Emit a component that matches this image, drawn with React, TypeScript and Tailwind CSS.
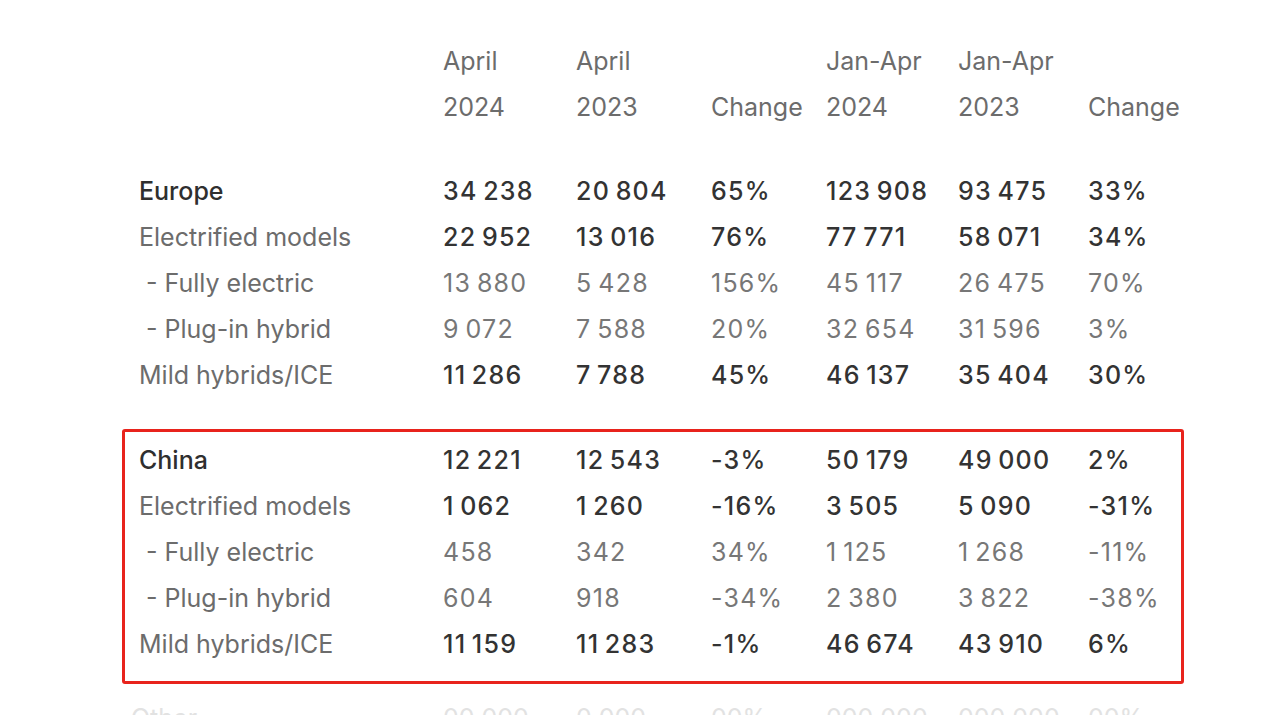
import React from "react";

type Row = {
  label: string;
  values: string[];
  kind: "region" | "bold" | "sub";
};

const europe: Row[] = [
  { label: "Europe", values: ["34 238", "20 804", "65%", "123 908", "93 475", "33%"], kind: "region" },
  { label: "Electrified models", values: ["22 952", "13 016", "76%", "77 771", "58 071", "34%"], kind: "bold" },
  { label: " - Fully electric", values: ["13 880", "5 428", "156%", "45 117", "26 475", "70%"], kind: "sub" },
  { label: " - Plug-in hybrid", values: ["9 072", "7 588", "20%", "32 654", "31 596", "3%"], kind: "sub" },
  { label: "Mild hybrids/ICE", values: ["11 286", "7 788", "45%", "46 137", "35 404", "30%"], kind: "bold" },
];

const china: Row[] = [
  { label: "China", values: ["12 221", "12 543", "-3%", "50 179", "49 000", "2%"], kind: "region" },
  { label: "Electrified models", values: ["1 062", "1 260", "-16%", "3 505", "5 090", "-31%"], kind: "bold" },
  { label: " - Fully electric", values: ["458", "342", "34%", "1 125", "1 268", "-11%"], kind: "sub" },
  { label: " - Plug-in hybrid", values: ["604", "918", "-34%", "2 380", "3 822", "-38%"], kind: "sub" },
  { label: "Mild hybrids/ICE", values: ["11 159", "11 283", "-1%", "46 674", "43 910", "6%"], kind: "bold" },
];

const cols = "grid grid-cols-[304px_133px_135px_115px_132px_130px_1fr] items-center";

// thousands separated by a narrow space, like the source
const fmt = (s: string) => s.replace(/ /g, "\u2009");

const TableRow = ({ row }: { row: Row }) => {
  const labelCls =
    row.kind === "region" ? "text-[#2f2f2f] font-medium" : "text-[#6c6c6c]";
  const valCls =
    row.kind === "sub" ? "text-[#777777]" : "text-[#333333] font-medium";
  return (
    <div className={`${cols} h-[46px]`}>
      <div className={`${labelCls} whitespace-pre`}>{row.label}</div>
      {row.values.map((v, i) => (
        <div key={i} className={`${valCls} tracking-[0.05em] whitespace-pre`}>
          {fmt(v)}
        </div>
      ))}
    </div>
  );
};

export default function App() {
  return (
    <div
      className="w-[1280px] h-[715px] overflow-hidden bg-white text-[25px] leading-none"
      style={{ fontFamily: "Inter, 'Noto Sans', sans-serif" }}
    >
      <div className="ml-[122px] w-[1062px] pt-[38px]">
        <div className="px-[17px] text-[#6c6c6c]">
          <div className={`${cols} h-[46px]`}>
            <div />
            <div>April</div>
            <div>April</div>
            <div />
            <div>Jan-Apr</div>
            <div>Jan-Apr</div>
            <div />
          </div>
          <div className={`${cols} h-[46px]`}>
            <div />
            <div>2024</div>
            <div>2023</div>
            <div>Change</div>
            <div>2024</div>
            <div>2023</div>
            <div>Change</div>
          </div>
        </div>

        <div className="px-[17px] mt-[38px]">
          {europe.map((r) => (
            <TableRow key={r.label} row={r} />
          ))}
        </div>

        <div className="mt-[31px] border-[3px] border-[#e8231c] rounded-[3px] px-[14px] pt-[5px] pb-[14px]">
          {china.map((r) => (
            <TableRow key={r.label} row={r} />
          ))}
        </div>

        {/* next section, cut off by the bottom edge */}
        <div className="px-[17px] mt-[11px] text-[#e2e2e2]">
          <div className={`${cols} h-[46px]`}>
            <div className="-ml-[8px]">Other</div>
            <div>00 000</div>
            <div>0 000</div>
            <div>00%</div>
            <div>000 000</div>
            <div>000 000</div>
            <div>00%</div>
          </div>
        </div>
      </div>
    </div>
  );
}
